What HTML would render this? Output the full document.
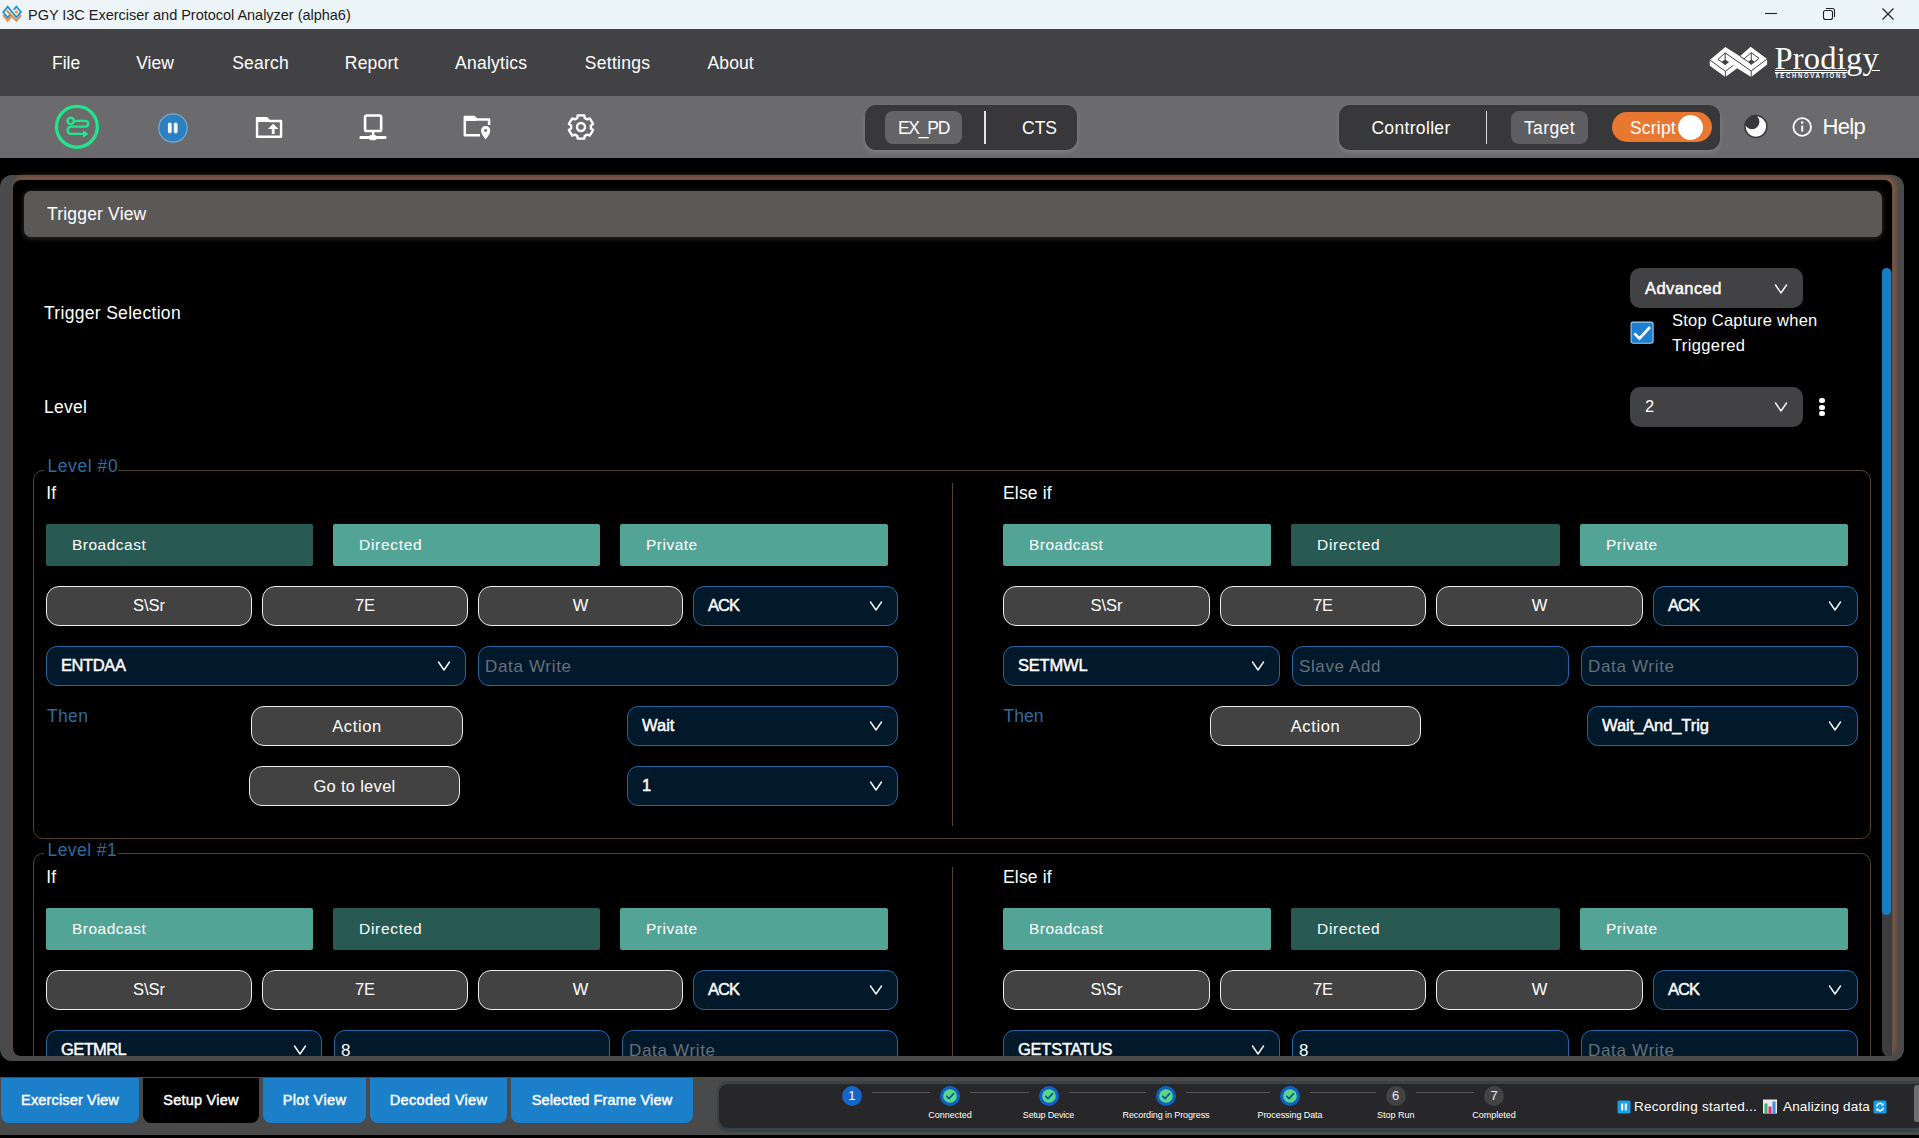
<!DOCTYPE html>
<html lang="en"><head><meta charset="utf-8"><title>PGY I3C Exerciser and Protocol Analyzer (alpha6)</title>
<style>
*{box-sizing:border-box;margin:0;padding:0}
html,body{width:1919px;height:1138px;overflow:hidden;background:#000}
body{position:relative;font-family:"Liberation Sans",sans-serif;color:#fff}
div,span.t,svg.a{position:absolute}
.t{white-space:nowrap;display:block}
div.t span{display:inline-block}
.grp{background:#38373a;border-radius:11px;box-shadow:0 2px 5px rgba(165,165,168,.4)}
.dd{background:#424143;border-radius:10px}
.tl{background:#52a596;border-radius:2px}
.td{background:#285a53;border-radius:2px}
.gb{background:#434243;border:1.5px solid #ececec;border-radius:13px}
.nv{background:#02192b;border:1px solid #2766a4;border-radius:11px}
.tab{background:#1b80c9;border-radius:1px 1px 8px 8px}
.fs{border:1px solid #55402a;border-radius:10px}
</style></head><body>

<div style="left:0px;top:0px;width:1919px;height:28.5px;background:linear-gradient(90deg,#f0f4f9 0,#ebf4f7 260px,#ebf4f7 100%);"></div>
<svg class="a" style="left:0;top:0" width="24" height="28" viewBox="0 0 24 28"><g transform="translate(.65 1.200) scale(.95)">
<g fill="none" stroke="#e98a42" stroke-width="2.100">
<path d="M2.600 14.300 L7.400 20.600 L10.800 16.600"/><path d="M6.400 9.800 L16.600 20.600 L21.500 14.300"/></g>
<circle cx="16.600" cy="11.400" r="1.500" fill="#e98a42"/>
<path d="M9.900 14.500 L7.400 17.300 L2.700 11.700 L7.400 5.800 L16.600 17 L21.300 11.300 L16.600 5.800 L13.700 9.200" fill="none" stroke="#2394d2" stroke-width="1.900"/>
</g></svg>
<span id="t1" class="t" style="top:4.5px;height:20px;line-height:20px;font-size:14.5px;color:#1b1b1b;letter-spacing:-0.021px;left:28px;">PGY I3C Exerciser and Protocol Analyzer (alpha6)</span>
<svg class="a" style="left:1760px;top:0" width="159" height="28" viewBox="0 0 159 28"><path d="M5 13.500 H17" stroke="#222" stroke-width="1.100"/><rect x="63.5" y="10.5" width="9" height="9" rx="2" fill="none" stroke="#222" stroke-width="1.1"/><path d="M66 8.5 H72.5 a2 2 0 0 1 2 2 V17" fill="none" stroke="#222" stroke-width="1.1"/><path d="M122.5 8.5 L133.5 19.5 M133.5 8.5 L122.5 19.5" stroke="#222" stroke-width="1.2"/></svg>
<div style="left:0px;top:28.5px;width:1919px;height:67.5px;background:#424244;"></div>
<span id="t2" class="t" style="top:50.5px;height:24px;line-height:24px;font-size:17.5px;color:#fff;left:52px;">File</span>
<span id="t3" class="t" style="top:50.5px;height:24px;line-height:24px;font-size:17.5px;color:#fff;left:136.2px;">View</span>
<span id="t4" class="t" style="top:50.5px;height:24px;line-height:24px;font-size:17.5px;color:#fff;letter-spacing:0.200px;left:232.2px;">Search</span>
<span id="t5" class="t" style="top:50.5px;height:24px;line-height:24px;font-size:17.5px;color:#fff;letter-spacing:0.200px;left:344.8px;">Report</span>
<span id="t6" class="t" style="top:50.5px;height:24px;line-height:24px;font-size:17.5px;color:#fff;letter-spacing:0.250px;left:455px;">Analytics</span>
<span id="t7" class="t" style="top:50.5px;height:24px;line-height:24px;font-size:17.5px;color:#fff;letter-spacing:0.272px;left:584.8px;">Settings</span>
<span id="t8" class="t" style="top:50.5px;height:24px;line-height:24px;font-size:17.5px;color:#fff;letter-spacing:0.125px;left:707.5px;">About</span>
<svg class="a" style="left:1700px;top:40px" width="80" height="45" viewBox="0 0 80 45">
<path fill="#fff" d="M25.300 6.900 L40 16.300 L50.600 6.700 L67.100 19 V24.600 L51.200 37.100 L37.100 28.300 L25.400 37.100 L9.800 25.800 V20 Z"/>
<path fill="#424244" d="M21.300 21.900 L25 19.500 L29 21.900 L25.200 25.300 Z M47.900 21.700 L51.500 19.600 L55 22.100 L51 25 Z"/>
<g fill="none" stroke="#424244" stroke-width="1">
<path d="M9.800 20 L25.400 31.300 V37.100 M25.400 31.300 L33.300 25.400"/>
<path d="M17.900 19.400 L25.200 12.900 L51.200 31 V37.100 M51.200 31 L67.100 19"/>
<path d="M25.200 12.900 V20 M17.900 19.400 L21.700 22"/>
<path d="M43.750 19 L51.250 12.700 L59 18.300 L54.600 22.100 M51.250 12.700 V20 M40 16.300 L48.300 21.800"/>
</g></svg>
<span id="t9" class="t" style="top:35.0px;height:46px;line-height:46px;font-size:32.5px;color:#fff;font-family:&quot;Liberation Serif&quot;,serif;left:1774.5px;letter-spacing:.2px;">Prodigy</span>
<div style="left:1775px;top:69.5px;width:72px;height:1.2000000000000028px;background:#fff;"></div>
<div style="left:1775px;top:71.6px;width:72px;height:0.8000000000000114px;background:#fff;"></div>
<div style="left:1872px;top:69.5px;width:8px;height:1.2000000000000028px;background:#fff;"></div>
<span id="t10" class="t" style="top:71.3px;height:10px;line-height:10px;font-size:7.5px;color:#fff;font-weight:700;left:1775px;letter-spacing:2.060px;transform:scaleX(.8);transform-origin:0 50%;">TECHNOVATIONS</span>
<div style="left:0px;top:96px;width:1919px;height:62px;background:#6b6a6c;"></div>
<svg class="a" style="left:53px;top:103px" width="48" height="48" viewBox="0 0 48 48">
<circle cx="23.9" cy="23.85" r="20.4" fill="none" stroke="#22e68c" stroke-width="3.3"/>
<g fill="none" stroke="#22e68c" stroke-width="2.4" stroke-linecap="round" stroke-linejoin="round">
<circle cx="17.7" cy="17.900" r="3.200"/>
<path d="M21.5 17.9 H32.3 a2.85 2.85 0 0 1 0 5.7 H18.25 a3.650 3.650 0 0 0 0 7.3 H31"/>
<path d="M30.6 28.2 L34.400 30.900 L30.600 33.800 Z" fill="#22e68c" stroke-width="1.2"/>
</g></svg>
<svg class="a" style="left:156px;top:111px" width="34" height="34" viewBox="0 0 34 34">
<circle cx="17" cy="17" r="14.2" fill="#2b80c2" stroke="#7aa9cf" stroke-width="1.2"/>
<rect x="11.9" y="11.4" width="3.8" height="11" rx="1.8" fill="#f4f8fc"/><rect x="17.800" y="11.400" width="3.800" height="11" rx="1.800" fill="#f4f8fc"/></svg>
<svg class="a" style="left:254px;top:114px" width="30" height="26" viewBox="0 0 30 26">
<path d="M3.05 4.1 H12.5 L15.2 6.950 H27.050 V22.800 H3.050 Z" fill="none" stroke="#fff" stroke-width="2.4" stroke-linejoin="round"/>
<path d="M3.050 4.100 H12.500 L15.200 6.950 V8 H3.050 Z" fill="#fff"/>
<path d="M19.2 9.800 L24.400 14.900 H20.600 V20 H17.800 V14.900 H14 Z" fill="#fff"/></svg>
<svg class="a" style="left:358px;top:112px" width="30" height="30" viewBox="0 0 30 30">
<rect x="7.050" y="3.500" width="16.100" height="15.500" rx="1.600" fill="none" stroke="#fff" stroke-width="2.600"/>
<path d="M15.100 20 V25" stroke="#fff" stroke-width="2.400"/>
<path d="M1.600 25.500 H28.300" stroke="#fff" stroke-width="3"/>
<rect x="10.700" y="23" width="8.300" height="5.200" rx="2.600" fill="#fff"/></svg>
<svg class="a" style="left:462px;top:113px" width="32" height="28" viewBox="0 0 32 28">
<path d="M27.100 12 V6.400 H14.600 L12 3.900 H2.800 V22.350 H18" fill="none" stroke="#fff" stroke-width="2.500" stroke-linejoin="round"/>
<path d="M2.800 3.900 H12 L14.600 6.400 V8 H2.800 Z" fill="#fff"/>
<path d="M23.650 12 a5.600 5.600 0 0 1 5.600 5.600 c0 3.900 -5.600 9.600 -5.600 9.600 s-5.600 -5.700 -5.600 -9.600 a5.600 5.600 0 0 1 5.600 -5.600 Z" fill="#6b6a6c"/>
<path d="M23.650 13 a4.650 4.650 0 0 1 4.650 4.650 c0 3.300 -4.650 8.550 -4.650 8.550 s-4.650 -5.250 -4.650 -8.550 a4.650 4.650 0 0 1 4.650 -4.650 Z" fill="#fff"/>
<circle cx="23.650" cy="17.500" r="1.450" fill="#6b6a6c"/></svg>
<svg class="a" style="left:566px;top:112.3px" width="30" height="30" viewBox="0 0 30 30">
<path fill="none" stroke="#fff" stroke-width="2.4" stroke-linejoin="round" d="M18.66 5.97 L18.33 3.34 L11.67 3.34 L11.34 5.97 L8.78 7.41 L6.26 6.37 L2.93 11.97 L5.12 13.57 L5.12 16.43 L2.93 18.03 L6.26 23.63 L8.78 22.59 L11.34 24.03 L11.67 26.66 L18.33 26.66 L18.66 24.03 L21.22 22.59 L23.74 23.63 L27.07 18.03 L24.88 16.43 L24.88 13.57 L27.07 11.97 L23.74 6.37 L21.22 7.41 Z"/>
<circle cx="15" cy="15" r="4" fill="none" stroke="#fff" stroke-width="2.4"/></svg>
<div class="grp" style="left:865px;top:105px;width:212px;height:45px;"></div>
<div style="left:885px;top:111px;width:77px;height:33px;background:#646466;border-radius:8px;"></div>
<div class="t" style="top:116.0px;height:24px;line-height:24px;font-size:17.5px;color:#fff;letter-spacing:-1.250px;left:523.5px;width:800px;text-align:center;"><span id="t11">EX_PD</span></div>
<div style="left:984.2px;top:111px;width:2.0px;height:33px;background:#e6e6e6;"></div>
<div class="t" style="top:116.0px;height:24px;line-height:24px;font-size:17.5px;color:#fff;left:639.5px;width:800px;text-align:center;"><span id="t12">CTS</span></div>
<div class="grp" style="left:1339px;top:105px;width:381px;height:45px;"></div>
<div class="t" style="top:116.0px;height:24px;line-height:24px;font-size:17.5px;color:#fff;letter-spacing:0.333px;left:1011px;width:800px;text-align:center;"><span id="t13">Controller</span></div>
<div style="left:1485.8px;top:111px;width:1.1000000000001364px;height:33px;background:#dcdcdc;"></div>
<div style="left:1511px;top:111px;width:77px;height:33px;background:#5e5e60;border-radius:8px;"></div>
<div class="t" style="top:116.0px;height:24px;line-height:24px;font-size:17.5px;color:#fff;letter-spacing:0.400px;left:1149.5px;width:800px;text-align:center;"><span id="t14">Target</span></div>
<div style="left:1612px;top:112px;width:100px;height:30px;background:#e8772f;border-radius:15px;"></div>
<span id="t15" class="t" style="top:115.5px;height:24px;line-height:24px;font-size:17.5px;color:#fff;letter-spacing:0.200px;left:1630px;">Script</span>
<div style="left:1678px;top:115px;width:25px;height:25px;background:#fff;border-radius:50%;"></div>
<svg class="a" style="left:1742px;top:113px" width="28" height="28" viewBox="0 0 28 28">
<defs><clipPath id="mc"><circle cx="13.900" cy="13.500" r="11"/></clipPath></defs>
<circle cx="13.900" cy="13.500" r="11" fill="#fff"/><circle cx="10" cy="8.800" r="7.400" fill="#39383b" clip-path="url(#mc)"/><circle cx="13.900" cy="13.500" r="11" fill="none" stroke="#39383b" stroke-width="1.500"/></svg>
<svg class="a" style="left:1790px;top:115px" width="24" height="24" viewBox="0 0 24 24">
<circle cx="12.200" cy="12" r="8.800" fill="none" stroke="#fff" stroke-width="1.800"/><path d="M12.200 10.600 V16.600" stroke="#fff" stroke-width="1.900"/><circle cx="12.200" cy="7.600" r="1.250" fill="#fff"/></svg>
<span id="t16" class="t" style="top:110.8px;height:31px;line-height:31px;font-size:22px;color:#fff;letter-spacing:-0.667px;left:1822.5px;">Help</span>
<div style="left:0px;top:175px;width:1904px;height:886px;background:#4a494b;border-radius:12px;"></div>
<div style="left:12.5px;top:180px;width:1879.0px;height:875.5px;background:#000;border-radius:8px;box-shadow:0 0 0 .6px #5c463a,2.5px -2.500px 4px 1.5px #80583f;"></div>
<div style="left:24px;top:190.5px;width:1858px;height:46.5px;background:#5a5958;border-radius:7px;box-shadow:0 1px 5px 1px rgba(120,120,120,.3);"></div>
<span id="t17" class="t" style="top:202.0px;height:24px;line-height:24px;font-size:17.5px;color:#fff;letter-spacing:0.182px;left:47px;">Trigger View</span>
<div style="left:1882px;top:268px;width:9.5px;height:789px;background:#3d3c3e;border-radius:5px 5px 0 8px;"></div>
<div style="left:1882px;top:268px;width:9px;height:647px;background:#197cc0;border-radius:5px;"></div>
<span id="t18" class="t" style="top:301.0px;height:24px;line-height:24px;font-size:17.5px;color:#fff;letter-spacing:0.312px;left:44px;">Trigger Selection</span>
<span id="t19" class="t" style="top:395.0px;height:24px;line-height:24px;font-size:17.5px;color:#fff;letter-spacing:0.250px;left:44px;">Level</span>
<div class="dd" style="left:1630px;top:268px;width:172.5px;height:39.5px;"></div>
<span id="t20" class="t" style="top:276.8px;height:23px;line-height:23px;font-size:16.5px;color:#fff;-webkit-text-stroke:.45px currentColor;letter-spacing:0.428px;left:1645px;">Advanced</span>
<svg class="a" style="left:1773px;top:282.5px" width="16" height="12" viewBox="0 0 16 12"><path d="M2.5 2 L8 10 L13.5 2" fill="none" stroke="#fff" stroke-width="1.4" stroke-linecap="round" stroke-linejoin="round"/></svg>
<svg class="a" style="left:1630px;top:321px" width="24" height="24" viewBox="0 0 24 24">
<rect x="1.100" y="1.100" width="22" height="21.200" rx="2.200" fill="#1d7fd0" stroke="#a6cbea" stroke-width="1.100"/>
<path d="M4.300 12.300 L9.500 17.500 L20 6" fill="none" stroke="#fff" stroke-width="2.600"/></svg>
<span id="t21" class="t" style="top:308.5px;height:23px;line-height:23px;font-size:16.5px;color:#fff;letter-spacing:0.250px;left:1672px;">Stop Capture when</span>
<span id="t22" class="t" style="top:333.5px;height:23px;line-height:23px;font-size:16.5px;color:#fff;letter-spacing:0.375px;left:1672px;">Triggered</span>
<div class="dd" style="left:1630px;top:387px;width:172.5px;height:40px;"></div>
<span id="t23" class="t" style="top:395.0px;height:23px;line-height:23px;font-size:16.5px;color:#fff;left:1645px;">2</span>
<svg class="a" style="left:1773px;top:401px" width="16" height="12" viewBox="0 0 16 12"><path d="M2.5 2 L8 10 L13.5 2" fill="none" stroke="#fff" stroke-width="1.4" stroke-linecap="round" stroke-linejoin="round"/></svg>
<div style="left:1819.3px;top:398.1px;width:5.400000000000091px;height:5.399999999999977px;background:#fff;border-radius:50%;"></div>
<div style="left:1819.3px;top:404.6px;width:5.400000000000091px;height:5.399999999999977px;background:#fff;border-radius:50%;"></div>
<div style="left:1819.3px;top:411.1px;width:5.400000000000091px;height:5.399999999999977px;background:#fff;border-radius:50%;"></div>
<div class="fs" style="left:33px;top:470px;width:1837.5px;height:368.70000000000005px;"></div>
<div class="lg" style="left:44px;top:467px;width:74px;height:6px;background:#000;"></div>
<span id="t24" class="t" style="top:453.5px;height:24px;line-height:24px;font-size:17.5px;color:#2e6c9e;letter-spacing:0.570px;left:47.5px;">Level #0</span>
<div style="left:952px;top:483px;width:1px;height:343px;background:#55402a;"></div>
<span id="t25" class="t" style="top:481.0px;height:24px;line-height:24px;font-size:17.5px;color:#fff;left:46.3px;">If</span>
<span id="t26" class="t" style="top:481.0px;height:24px;line-height:24px;font-size:17.5px;color:#fff;letter-spacing:0.167px;left:1003px;">Else if</span>
<div class="td" style="left:46px;top:524px;width:267px;height:42px;"></div>
<span id="t27" class="t" style="top:534.0px;height:22px;line-height:22px;font-size:15.5px;color:#fff;letter-spacing:0.500px;left:72px;">Broadcast</span>
<div class="tl" style="left:333px;top:524px;width:267px;height:42px;"></div>
<span id="t28" class="t" style="top:534.0px;height:22px;line-height:22px;font-size:15.5px;color:#fff;letter-spacing:0.714px;left:359px;">Directed</span>
<div class="tl" style="left:620px;top:524px;width:268px;height:42px;"></div>
<span id="t29" class="t" style="top:534.0px;height:22px;line-height:22px;font-size:15.5px;color:#fff;letter-spacing:0.500px;left:646px;">Private</span>
<div class="tl" style="left:1003px;top:524px;width:268px;height:42px;"></div>
<span id="t30" class="t" style="top:534.0px;height:22px;line-height:22px;font-size:15.5px;color:#fff;letter-spacing:0.500px;left:1029px;">Broadcast</span>
<div class="td" style="left:1291px;top:524px;width:269px;height:42px;"></div>
<span id="t31" class="t" style="top:534.0px;height:22px;line-height:22px;font-size:15.5px;color:#fff;letter-spacing:0.714px;left:1317px;">Directed</span>
<div class="tl" style="left:1580px;top:524px;width:268px;height:42px;"></div>
<span id="t32" class="t" style="top:534.0px;height:22px;line-height:22px;font-size:15.5px;color:#fff;letter-spacing:0.500px;left:1606px;">Private</span>
<div class="gb" style="left:46px;top:586px;width:206px;height:40px;"></div>
<div class="t" style="top:594.2px;height:23px;line-height:23px;font-size:16.5px;color:#fff;left:-251.0px;width:800px;text-align:center;"><span id="t33">S\Sr</span></div>
<div class="gb" style="left:262px;top:586px;width:206px;height:40px;"></div>
<div class="t" style="top:594.2px;height:23px;line-height:23px;font-size:16.5px;color:#fff;left:-35.0px;width:800px;text-align:center;"><span id="t34">7E</span></div>
<div class="gb" style="left:478px;top:586px;width:205px;height:40px;"></div>
<div class="t" style="top:594.2px;height:23px;line-height:23px;font-size:16.5px;color:#fff;left:180.5px;width:800px;text-align:center;"><span id="t35">W</span></div>
<div class="nv" style="left:693px;top:586px;width:205px;height:40px;"></div>
<span id="t36" class="t" style="top:594.0px;height:23px;line-height:23px;font-size:16.5px;color:#fff;-webkit-text-stroke:.45px currentColor;letter-spacing:-1.000px;left:708px;">ACK</span>
<svg class="a" style="left:867.5px;top:599.5px" width="16" height="12" viewBox="0 0 16 12"><path d="M2.5 2 L8 10 L13.5 2" fill="none" stroke="#fff" stroke-width="1.4" stroke-linecap="round" stroke-linejoin="round"/></svg>
<div class="gb" style="left:1003px;top:586px;width:207px;height:40px;"></div>
<div class="t" style="top:594.2px;height:23px;line-height:23px;font-size:16.5px;color:#fff;left:706.5px;width:800px;text-align:center;"><span id="t37">S\Sr</span></div>
<div class="gb" style="left:1220px;top:586px;width:206px;height:40px;"></div>
<div class="t" style="top:594.2px;height:23px;line-height:23px;font-size:16.5px;color:#fff;left:923.0px;width:800px;text-align:center;"><span id="t38">7E</span></div>
<div class="gb" style="left:1436px;top:586px;width:207px;height:40px;"></div>
<div class="t" style="top:594.2px;height:23px;line-height:23px;font-size:16.5px;color:#fff;left:1139.5px;width:800px;text-align:center;"><span id="t39">W</span></div>
<div class="nv" style="left:1653px;top:586px;width:204.5px;height:40px;"></div>
<span id="t40" class="t" style="top:594.0px;height:23px;line-height:23px;font-size:16.5px;color:#fff;-webkit-text-stroke:.45px currentColor;letter-spacing:-1.000px;left:1668px;">ACK</span>
<svg class="a" style="left:1827.0px;top:599.5px" width="16" height="12" viewBox="0 0 16 12"><path d="M2.5 2 L8 10 L13.5 2" fill="none" stroke="#fff" stroke-width="1.4" stroke-linecap="round" stroke-linejoin="round"/></svg>
<div class="nv" style="left:46px;top:646px;width:420px;height:40px;"></div>
<span id="t41" class="t" style="top:654.3px;height:23px;line-height:23px;font-size:16.5px;color:#fff;-webkit-text-stroke:.45px currentColor;letter-spacing:-0.400px;left:61px;">ENTDAA</span>
<svg class="a" style="left:435.5px;top:659.5px" width="16" height="12" viewBox="0 0 16 12"><path d="M2.5 2 L8 10 L13.5 2" fill="none" stroke="#fff" stroke-width="1.4" stroke-linecap="round" stroke-linejoin="round"/></svg>
<div class="nv" style="left:478px;top:646px;width:420px;height:40px;"></div>
<span id="t42" class="t" style="top:654.5px;height:24px;line-height:24px;font-size:17px;color:#66717a;letter-spacing:0.665px;left:485px;">Data Write</span>
<div class="nv" style="left:1003px;top:646px;width:277px;height:40px;"></div>
<span id="t43" class="t" style="top:654.3px;height:23px;line-height:23px;font-size:16.5px;color:#fff;-webkit-text-stroke:.45px currentColor;letter-spacing:-0.200px;left:1018px;">SETMWL</span>
<svg class="a" style="left:1249.5px;top:659.5px" width="16" height="12" viewBox="0 0 16 12"><path d="M2.5 2 L8 10 L13.5 2" fill="none" stroke="#fff" stroke-width="1.4" stroke-linecap="round" stroke-linejoin="round"/></svg>
<div class="nv" style="left:1292px;top:646px;width:277px;height:40px;"></div>
<span id="t44" class="t" style="top:654.5px;height:24px;line-height:24px;font-size:17px;color:#66717a;letter-spacing:0.625px;left:1299px;">Slave Add</span>
<div class="nv" style="left:1581px;top:646px;width:276.5px;height:40px;"></div>
<span id="t45" class="t" style="top:654.5px;height:24px;line-height:24px;font-size:17px;color:#66717a;letter-spacing:0.665px;left:1588px;">Data Write</span>
<span id="t46" class="t" style="top:704.0px;height:24px;line-height:24px;font-size:17.5px;color:#2e6c9e;letter-spacing:0.335px;left:47px;">Then</span>
<span id="t47" class="t" style="top:704.0px;height:24px;line-height:24px;font-size:17.5px;color:#2e6c9e;left:1003.5px;">Then</span>
<div class="gb" style="left:251px;top:706px;width:212px;height:40px;"></div>
<div class="t" style="top:714.5px;height:23px;line-height:23px;font-size:16.5px;color:#fff;letter-spacing:0.600px;left:-43.0px;width:800px;text-align:center;"><span id="t48">Action</span></div>
<div class="nv" style="left:627px;top:706px;width:271px;height:40px;"></div>
<span id="t49" class="t" style="top:714.3px;height:23px;line-height:23px;font-size:16.5px;color:#fff;-webkit-text-stroke:.45px currentColor;left:642px;">Wait</span>
<svg class="a" style="left:867.5px;top:719.5px" width="16" height="12" viewBox="0 0 16 12"><path d="M2.5 2 L8 10 L13.5 2" fill="none" stroke="#fff" stroke-width="1.4" stroke-linecap="round" stroke-linejoin="round"/></svg>
<div class="gb" style="left:1210px;top:706px;width:211px;height:40px;"></div>
<div class="t" style="top:714.5px;height:23px;line-height:23px;font-size:16.5px;color:#fff;letter-spacing:0.600px;left:915.5px;width:800px;text-align:center;"><span id="t50">Action</span></div>
<div class="nv" style="left:1587px;top:706px;width:270.5px;height:40px;"></div>
<span id="t51" class="t" style="top:714.3px;height:23px;line-height:23px;font-size:16.5px;color:#fff;-webkit-text-stroke:.45px currentColor;letter-spacing:-0.083px;left:1602px;">Wait_And_Trig</span>
<svg class="a" style="left:1827.0px;top:719.5px" width="16" height="12" viewBox="0 0 16 12"><path d="M2.5 2 L8 10 L13.5 2" fill="none" stroke="#fff" stroke-width="1.4" stroke-linecap="round" stroke-linejoin="round"/></svg>
<div class="gb" style="left:249px;top:766px;width:211px;height:40px;"></div>
<div class="t" style="top:774.5px;height:23px;line-height:23px;font-size:16.5px;color:#fff;letter-spacing:0.300px;left:-45.5px;width:800px;text-align:center;"><span id="t52">Go to level</span></div>
<div class="nv" style="left:627px;top:766px;width:271px;height:40px;"></div>
<span id="t53" class="t" style="top:774.3px;height:23px;line-height:23px;font-size:16.5px;color:#fff;-webkit-text-stroke:.45px currentColor;left:642px;">1</span>
<svg class="a" style="left:867.5px;top:779.5px" width="16" height="12" viewBox="0 0 16 12"><path d="M2.5 2 L8 10 L13.5 2" fill="none" stroke="#fff" stroke-width="1.4" stroke-linecap="round" stroke-linejoin="round"/></svg>
<div class="fs" style="left:33px;top:853.3px;width:1837.5px;height:369.4000000000001px;"></div>
<div class="lg" style="left:44px;top:851px;width:74px;height:6px;background:#000;"></div>
<span id="t54" class="t" style="top:837.5px;height:24px;line-height:24px;font-size:17.5px;color:#2e6c9e;letter-spacing:0.428px;left:47.5px;">Level #1</span>
<div style="left:952px;top:867px;width:1px;height:343px;background:#55402a;"></div>
<span id="t55" class="t" style="top:865.0px;height:24px;line-height:24px;font-size:17.5px;color:#fff;left:46.3px;">If</span>
<span id="t56" class="t" style="top:865.0px;height:24px;line-height:24px;font-size:17.5px;color:#fff;letter-spacing:0.167px;left:1003px;">Else if</span>
<div class="tl" style="left:46px;top:908px;width:267px;height:42px;"></div>
<span id="t57" class="t" style="top:918.0px;height:22px;line-height:22px;font-size:15.5px;color:#fff;letter-spacing:0.500px;left:72px;">Broadcast</span>
<div class="td" style="left:333px;top:908px;width:267px;height:42px;"></div>
<span id="t58" class="t" style="top:918.0px;height:22px;line-height:22px;font-size:15.5px;color:#fff;letter-spacing:0.714px;left:359px;">Directed</span>
<div class="tl" style="left:620px;top:908px;width:268px;height:42px;"></div>
<span id="t59" class="t" style="top:918.0px;height:22px;line-height:22px;font-size:15.5px;color:#fff;letter-spacing:0.500px;left:646px;">Private</span>
<div class="tl" style="left:1003px;top:908px;width:268px;height:42px;"></div>
<span id="t60" class="t" style="top:918.0px;height:22px;line-height:22px;font-size:15.5px;color:#fff;letter-spacing:0.500px;left:1029px;">Broadcast</span>
<div class="td" style="left:1291px;top:908px;width:269px;height:42px;"></div>
<span id="t61" class="t" style="top:918.0px;height:22px;line-height:22px;font-size:15.5px;color:#fff;letter-spacing:0.714px;left:1317px;">Directed</span>
<div class="tl" style="left:1580px;top:908px;width:268px;height:42px;"></div>
<span id="t62" class="t" style="top:918.0px;height:22px;line-height:22px;font-size:15.5px;color:#fff;letter-spacing:0.500px;left:1606px;">Private</span>
<div class="gb" style="left:46px;top:970px;width:206px;height:40px;"></div>
<div class="t" style="top:978.2px;height:23px;line-height:23px;font-size:16.5px;color:#fff;left:-251.0px;width:800px;text-align:center;"><span id="t63">S\Sr</span></div>
<div class="gb" style="left:262px;top:970px;width:206px;height:40px;"></div>
<div class="t" style="top:978.2px;height:23px;line-height:23px;font-size:16.5px;color:#fff;left:-35.0px;width:800px;text-align:center;"><span id="t64">7E</span></div>
<div class="gb" style="left:478px;top:970px;width:205px;height:40px;"></div>
<div class="t" style="top:978.2px;height:23px;line-height:23px;font-size:16.5px;color:#fff;left:180.5px;width:800px;text-align:center;"><span id="t65">W</span></div>
<div class="nv" style="left:693px;top:970px;width:205px;height:40px;"></div>
<span id="t66" class="t" style="top:978.0px;height:23px;line-height:23px;font-size:16.5px;color:#fff;-webkit-text-stroke:.45px currentColor;letter-spacing:-1.000px;left:708px;">ACK</span>
<svg class="a" style="left:867.5px;top:983.5px" width="16" height="12" viewBox="0 0 16 12"><path d="M2.5 2 L8 10 L13.5 2" fill="none" stroke="#fff" stroke-width="1.4" stroke-linecap="round" stroke-linejoin="round"/></svg>
<div class="gb" style="left:1003px;top:970px;width:207px;height:40px;"></div>
<div class="t" style="top:978.2px;height:23px;line-height:23px;font-size:16.5px;color:#fff;left:706.5px;width:800px;text-align:center;"><span id="t67">S\Sr</span></div>
<div class="gb" style="left:1220px;top:970px;width:206px;height:40px;"></div>
<div class="t" style="top:978.2px;height:23px;line-height:23px;font-size:16.5px;color:#fff;left:923.0px;width:800px;text-align:center;"><span id="t68">7E</span></div>
<div class="gb" style="left:1436px;top:970px;width:207px;height:40px;"></div>
<div class="t" style="top:978.2px;height:23px;line-height:23px;font-size:16.5px;color:#fff;left:1139.5px;width:800px;text-align:center;"><span id="t69">W</span></div>
<div class="nv" style="left:1653px;top:970px;width:204.5px;height:40px;"></div>
<span id="t70" class="t" style="top:978.0px;height:23px;line-height:23px;font-size:16.5px;color:#fff;-webkit-text-stroke:.45px currentColor;letter-spacing:-1.000px;left:1668px;">ACK</span>
<svg class="a" style="left:1827.0px;top:983.5px" width="16" height="12" viewBox="0 0 16 12"><path d="M2.5 2 L8 10 L13.5 2" fill="none" stroke="#fff" stroke-width="1.4" stroke-linecap="round" stroke-linejoin="round"/></svg>
<div class="nv" style="left:46px;top:1030px;width:276px;height:40px;"></div>
<span id="t71" class="t" style="top:1038.3px;height:23px;line-height:23px;font-size:16.5px;color:#fff;-webkit-text-stroke:.45px currentColor;letter-spacing:-0.600px;left:61px;">GETMRL</span>
<svg class="a" style="left:291.5px;top:1043.5px" width="16" height="12" viewBox="0 0 16 12"><path d="M2.5 2 L8 10 L13.5 2" fill="none" stroke="#fff" stroke-width="1.4" stroke-linecap="round" stroke-linejoin="round"/></svg>
<div class="nv" style="left:334px;top:1030px;width:276px;height:40px;"></div>
<span id="t72" class="t" style="top:1038.5px;height:24px;line-height:24px;font-size:17px;color:#fff;left:341px;">8</span>
<div class="nv" style="left:622px;top:1030px;width:276px;height:40px;"></div>
<span id="t73" class="t" style="top:1038.5px;height:24px;line-height:24px;font-size:17px;color:#66717a;letter-spacing:0.668px;left:629px;">Data Write</span>
<div class="nv" style="left:1003px;top:1030px;width:277px;height:40px;"></div>
<span id="t74" class="t" style="top:1038.3px;height:23px;line-height:23px;font-size:16.5px;color:#fff;-webkit-text-stroke:.45px currentColor;letter-spacing:-0.250px;left:1018px;">GETSTATUS</span>
<svg class="a" style="left:1249.5px;top:1043.5px" width="16" height="12" viewBox="0 0 16 12"><path d="M2.5 2 L8 10 L13.5 2" fill="none" stroke="#fff" stroke-width="1.4" stroke-linecap="round" stroke-linejoin="round"/></svg>
<div class="nv" style="left:1292px;top:1030px;width:277px;height:40px;"></div>
<span id="t75" class="t" style="top:1038.5px;height:24px;line-height:24px;font-size:17px;color:#fff;left:1299px;">8</span>
<div class="nv" style="left:1581px;top:1030px;width:276.5px;height:40px;"></div>
<span id="t76" class="t" style="top:1038.5px;height:24px;line-height:24px;font-size:17px;color:#66717a;letter-spacing:0.668px;left:1588px;">Data Write</span>
<div class="mask" style="left:12.5px;top:1055.5px;width:1879.0px;height:5.5px;background:#4a494b;"></div>
<div class="mask" style="left:0px;top:1061px;width:1919px;height:16px;background:#000;"></div>
<div style="left:0px;top:1077px;width:1919px;height:57.700000000000045px;background:#4a4a4b;"></div>
<div class="tab" style="left:1px;top:1078px;width:138px;height:45px;"></div>
<div class="t" style="top:1090.0px;height:20px;line-height:20px;font-size:14.5px;color:#fff;-webkit-text-stroke:.45px currentColor;letter-spacing:0.154px;left:-330.0px;width:800px;text-align:center;"><span id="t77">Exerciser View</span></div>
<div class="tab" style="left:143px;top:1078px;width:116px;height:45px;background:#000;"></div>
<div class="t" style="top:1090.0px;height:20px;line-height:20px;font-size:14.5px;color:#fff;-webkit-text-stroke:.45px currentColor;letter-spacing:0.222px;left:-199.0px;width:800px;text-align:center;"><span id="t78">Setup View</span></div>
<div class="tab" style="left:263px;top:1078px;width:103px;height:45px;"></div>
<div class="t" style="top:1090.0px;height:20px;line-height:20px;font-size:14.5px;color:#fff;-webkit-text-stroke:.45px currentColor;letter-spacing:0.375px;left:-85.5px;width:800px;text-align:center;"><span id="t79">Plot View</span></div>
<div class="tab" style="left:370px;top:1078px;width:137px;height:45px;"></div>
<div class="t" style="top:1090.0px;height:20px;line-height:20px;font-size:14.5px;color:#fff;-webkit-text-stroke:.45px currentColor;letter-spacing:0.364px;left:38.5px;width:800px;text-align:center;"><span id="t80">Decoded View</span></div>
<div class="tab" style="left:511px;top:1078px;width:182px;height:45px;"></div>
<div class="t" style="top:1090.0px;height:20px;line-height:20px;font-size:14.5px;color:#fff;-webkit-text-stroke:.45px currentColor;letter-spacing:0.167px;left:202.0px;width:800px;text-align:center;"><span id="t81">Selected Frame View</span></div>
<div style="left:717px;top:1081px;width:1208px;height:51px;background:#374249;border-radius:11px;"></div>
<div style="left:719px;top:1083.5px;width:1206px;height:44.5px;background:#272729;border-radius:9px;"></div>
<div style="left:1914px;top:1084.5px;width:8px;height:37.5px;background:#6e6e70;border-radius:3px;"></div>
<div style="left:871.8px;top:1092px;width:58.200000000000045px;height:1.400000000000091px;background:#535355;"></div>
<div style="left:970px;top:1092px;width:58.5px;height:1.400000000000091px;background:#535355;"></div>
<div style="left:1068.5px;top:1092px;width:77.5px;height:1.400000000000091px;background:#535355;"></div>
<div style="left:1186px;top:1092px;width:84px;height:1.400000000000091px;background:#535355;"></div>
<div style="left:1310px;top:1092px;width:65.70000000000005px;height:1.400000000000091px;background:#535355;"></div>
<div style="left:1415.7px;top:1092px;width:58.299999999999955px;height:1.400000000000091px;background:#535355;"></div>
<div style="left:841.8px;top:1085.5px;width:20.0px;height:20.0px;background:#1565c8;border-radius:50%;"></div>
<div class="t" style="top:1086.5px;height:18px;line-height:18px;font-size:13px;color:#fff;left:451.79999999999995px;width:800px;text-align:center;"><span id="t82">1</span></div>
<svg class="a" style="left:940px;top:1085.5px" width="20" height="20" viewBox="0 0 20 20"><circle cx="10" cy="10" r="10" fill="#1060c6"/><circle cx="10" cy="10" r="6.800" fill="#58d987"/><path d="M6.600 10.200 L9 12.600 L13.600 7.600" fill="none" stroke="#0d4f9f" stroke-width="1.600" stroke-linecap="round" stroke-linejoin="round"/></svg>
<div class="t" style="top:1108.7px;height:13px;line-height:13px;font-size:9px;color:#fff;left:550px;width:800px;text-align:center;"><span id="t83">Connected</span></div>
<svg class="a" style="left:1038.5px;top:1085.5px" width="20" height="20" viewBox="0 0 20 20"><circle cx="10" cy="10" r="10" fill="#1060c6"/><circle cx="10" cy="10" r="6.800" fill="#58d987"/><path d="M6.600 10.200 L9 12.600 L13.600 7.600" fill="none" stroke="#0d4f9f" stroke-width="1.600" stroke-linecap="round" stroke-linejoin="round"/></svg>
<div class="t" style="top:1108.7px;height:13px;line-height:13px;font-size:9px;color:#fff;letter-spacing:-0.182px;left:648.5px;width:800px;text-align:center;"><span id="t84">Setup Device</span></div>
<svg class="a" style="left:1156px;top:1085.5px" width="20" height="20" viewBox="0 0 20 20"><circle cx="10" cy="10" r="10" fill="#1060c6"/><circle cx="10" cy="10" r="6.800" fill="#58d987"/><path d="M6.600 10.200 L9 12.600 L13.600 7.600" fill="none" stroke="#0d4f9f" stroke-width="1.600" stroke-linecap="round" stroke-linejoin="round"/></svg>
<div class="t" style="top:1108.7px;height:13px;line-height:13px;font-size:9px;color:#fff;letter-spacing:-0.100px;left:766px;width:800px;text-align:center;"><span id="t85">Recording in Progress</span></div>
<svg class="a" style="left:1280px;top:1085.5px" width="20" height="20" viewBox="0 0 20 20"><circle cx="10" cy="10" r="10" fill="#1060c6"/><circle cx="10" cy="10" r="6.800" fill="#58d987"/><path d="M6.600 10.200 L9 12.600 L13.600 7.600" fill="none" stroke="#0d4f9f" stroke-width="1.600" stroke-linecap="round" stroke-linejoin="round"/></svg>
<div class="t" style="top:1108.7px;height:13px;line-height:13px;font-size:9px;color:#fff;letter-spacing:-0.071px;left:890px;width:800px;text-align:center;"><span id="t86">Processing Data</span></div>
<div style="left:1385.7px;top:1085.5px;width:20.0px;height:20.0px;background:#434345;border-radius:50%;"></div>
<div class="t" style="top:1086.5px;height:18px;line-height:18px;font-size:13px;color:#e8e8e8;left:995.7px;width:800px;text-align:center;"><span id="t87">6</span></div>
<div class="t" style="top:1108.7px;height:13px;line-height:13px;font-size:9px;color:#fff;left:995.7px;width:800px;text-align:center;"><span id="t88">Stop Run</span></div>
<div style="left:1484px;top:1085.5px;width:20px;height:20.0px;background:#434345;border-radius:50%;"></div>
<div class="t" style="top:1086.5px;height:18px;line-height:18px;font-size:13px;color:#e8e8e8;left:1094px;width:800px;text-align:center;"><span id="t89">7</span></div>
<div class="t" style="top:1108.7px;height:13px;line-height:13px;font-size:9px;color:#fff;left:1094px;width:800px;text-align:center;"><span id="t90">Completed</span></div>
<svg class="a" style="left:1617px;top:1100px" width="14" height="14" viewBox="0 0 14 14"><rect x="0.5" y="0.5" width="13" height="13" rx="1.5" fill="#1b9ce8"/><rect x="4.200" y="3.5" width="2" height="7" fill="#fff"/><rect x="7.800" y="3.500" width="2" height="7" fill="#fff"/></svg>
<span id="t91" class="t" style="top:1097.0px;height:19px;line-height:19px;font-size:13.5px;color:#fff;letter-spacing:0.263px;left:1634px;">Recording started...</span>
<svg class="a" style="left:1763px;top:1099px" width="14" height="15" viewBox="0 0 14 15"><rect x="0" y="0.5" width="14" height="14" fill="#e9e9ee"/><rect x="1.500" y="4.500" width="3" height="9.500" fill="#35b86b"/><rect x="5.500" y="7.500" width="3" height="6.500" fill="#e8267c"/><rect x="9.500" y="2.500" width="3" height="11.500" fill="#3d8fe0"/></svg>
<span id="t92" class="t" style="top:1097.0px;height:19px;line-height:19px;font-size:13.5px;color:#fff;letter-spacing:0.154px;left:1783px;">Analizing data</span>
<svg class="a" style="left:1873px;top:1100px" width="14" height="14" viewBox="0 0 14 14"><rect x="0.500" y="0.5" width="13" height="13" rx="1.500" fill="#139be9"/><path d="M3.600 6.500 a3.500 3.500 0 0 1 6.200 -1.800 M10.400 7.500 a3.500 3.500 0 0 1 -6.200 1.800" fill="none" stroke="#fff" stroke-width="1.500"/><path d="M10.600 2.800 V5.400 H8 Z M3.400 11.200 V8.600 H6 Z" fill="#fff"/></svg>
<div style="left:0px;top:1134.5px;width:1919px;height:3.5px;background:#000;"></div>
</body></html>
